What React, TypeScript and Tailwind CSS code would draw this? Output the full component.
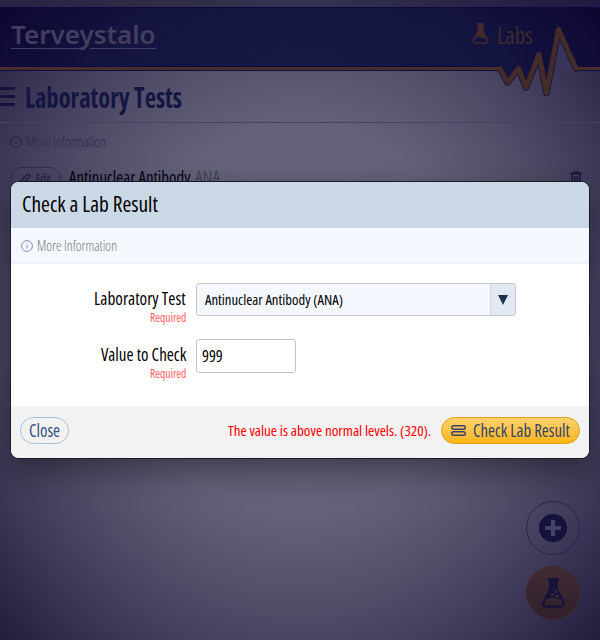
import React, { useLayoutEffect, useRef, useState } from "react";

// Condensed label: squeezes its text horizontally to a given width.
function Fit({ w, className = "", children }: { w: number; className?: string; children: string }) {
  const ref = useRef<HTMLSpanElement>(null);
  const [scale, setScale] = useState(1);
  useLayoutEffect(() => {
    if (ref.current) setScale(w / ref.current.offsetWidth);
  }, [w, children]);
  return (
    <span className={`block shrink-0 whitespace-nowrap ${className}`} style={{ width: w }}>
      <span ref={ref} className="inline-block origin-left align-top" style={{ transform: `scaleX(${scale})` }}>
        {children}
      </span>
    </span>
  );
}

function InfoIcon({ className }: { className: string }) {
  return (
    <svg viewBox="0 0 12 12" className={`size-3 shrink-0 ${className}`} fill="none" stroke="currentColor">
      <circle cx="6" cy="6" r="5.4" strokeWidth="1" />
      <path d="M6 5.200v3.300M6 3.300v1" strokeWidth="1" />
    </svg>
  );
}

function Flask({ className, bubbles = false }: { className: string; bubbles?: boolean }) {
  return (
    <svg viewBox="0 0 22 29" className={className} fill="none" stroke="currentColor">
      <path d="M6 1.500h10" strokeWidth="3" />
      <path d="M8 2v8.500L1.800 22.500Q-.2 27.300 4 27.600h14q4.200-.3 2.200-5.100L14 10.500V2" strokeWidth="2.200" />
      {bubbles ? (
        <>
          <path d="M8 2h6v9l4.500 8q-3 2-5.500.8T8 19l-4 1 4-9z" fill="currentColor" stroke="none" />
          <circle cx="14.300" cy="17.800" r="2.300" className="fill-[#3a2832]" strokeWidth=".8" />
          <circle cx="9.800" cy="16" r="1.500" className="fill-[#3a2832]" stroke="none" />
          <circle cx="13.300" cy="13.200" r="1.500" className="fill-[#3a2832]" stroke="none" />
          <circle cx="11.500" cy="10" r=".9" className="fill-[#3a2832]" stroke="none" />
        </>
      ) : (
        <path d="M8 2h6v9l5 9.500q-3 2-5.500.3T8 19.500 3 21.500l5-10.500z" fill="currentColor" stroke="none" />
      )}
    </svg>
  );
}

export default function App() {
  return (
    <div className="relative h-[640px] w-[600px] overflow-hidden bg-[radial-gradient(ellipse_430px_480px_at_50%_50%,#6a687f_0%,#646279_40%,#514d69_60%,#393453_80%,#1f1839_100%)] font-['Open_Sans',sans-serif] [font-stretch:75%]">
      <div className="h-[7px] bg-[linear-gradient(90deg,#282340,#35334f_50%,#211941)]" />
      <header className="relative flex h-[64px] items-start justify-between border-y border-[#0d0941] bg-[radial-gradient(ellipse_350px_140px_at_50%_100%,#161a45,#13133f_60%,#0c0630)]">
        <div className="ml-[11px] mt-[8px] flex flex-col text-[#433d5e]">
          <Fit w={145} className="h-[32px] font-['Noto_Sans',sans-serif] text-[26px] font-semibold leading-[36px]">Terveystalo</Fit>
          <div className="flex gap-[9px]">
            <div className="h-px w-[70px] bg-[#433d5e]" />
            <div className="h-px w-[66px] bg-[#433d5e]" />
          </div>
        </div>
        <div className="mr-[67px] mt-[11px] flex gap-2 text-[#42292d]">
          <Flask className="mt-[4px] h-[21px] w-[17px]" />
          <Fit w={36} className="text-[24px] leading-[31px]">Labs</Fit>
        </div>
        <svg viewBox="0 0 600 100" className="absolute -top-[8px] left-0 h-[100px] w-[600px]" fill="none" strokeLinejoin="round">
          <path d="M500 68.500l7.500 14 11-14zM518.500 68.500l7.500 19 8-19zM541 68.500l5.500 24.500 5-24.500z" fill="#15133f" />
          <path d="M551 68.500l7.500-39 17.500 39v3H551zM533 71l6-16.500 4 16.500z" fill="#39345a" />
          <path d="M0 68.500h500M576 68.500h24" stroke="#100b42" strokeWidth="5" />
          <path d="M500 68.500l7.500 14 11-14 7.500 19 13-33 7.500 38.500 12-63.500 17.500 39" stroke="#15123c" strokeWidth="6.500" strokeLinecap="round" />
          <path d="M0 68.500h500M576 68.500h24" stroke="#482e2a" strokeWidth="3" />
          <path d="M500 68.500l7.500 14 11-14 7.500 19 13-33 7.500 38.500 12-63.500 17.500 39" stroke="#422b28" strokeWidth="5" strokeLinecap="round" />
        </svg>
      </header>

      <div className="flex h-[52px] items-center gap-[10px] border-b border-[#454264]">
        <div className="flex flex-col gap-[5px]">
          <div className="h-[3px] w-[15px] bg-[#15123f]" />
          <div className="h-[3px] w-[15px] bg-[#15123f]" />
          <div className="h-[3px] w-[15px] bg-[#15123f]" />
        </div>
        <Fit w={157} className="text-[28px] font-bold leading-[52px] text-[#151543]">Laboratory Tests</Fit>
      </div>
      <div className="flex h-[38px] items-center gap-1 pl-[10px] text-[#2d294a]">
        <InfoIcon className="text-[#25214c]" />
        <Fit w={80} className="text-[14px] font-light leading-5">More Information</Fit>
      </div>
      <div className="flex items-start pl-[10px] pt-[6px]">
        <div className="flex h-[24px] w-[51px] items-center gap-[5px] rounded-full border border-[#302c54] pl-[8px] text-[#1d1a48]">
          <svg viewBox="0 0 12 12" className="size-3 shrink-0" fill="none" stroke="currentColor" strokeWidth="1.100">
            <path d="M1 11l.8-3.200L8 1.500q1-1 2 0l.5.500q1 1 0 2L4.200 10.200z" />
          </svg>
          <Fit w={15} className="text-[12px] leading-5">Edit</Fit>
        </div>
        <Fit w={121} className="ml-[8px] text-[18px] font-medium leading-[21px] text-[#050414]">Antinuclear Antibody</Fit>
        <Fit w={25} className="ml-[5px] text-[18px] font-light leading-[21px] text-[#353246]">ANA</Fit>
        <svg viewBox="0 0 12 16" className="ml-auto mr-[18px] mt-[4px] h-4 w-3" fill="none" stroke="#171441">
          <path d="M4 2V.500h4V2" />
          <path d="M.500 2.500h11" strokeWidth="2" />
          <path d="M2 3v12h8V3M4.700 5v8M7.300 5v8" strokeWidth="1.400" />
        </svg>
      </div>

      <div className="absolute left-[526px] top-[501px] flex size-[54px] items-center justify-center rounded-full border border-[#29264f]">
        <svg viewBox="0 0 28 28" className="size-7">
          <circle cx="14" cy="14" r="14" fill="#15123e" />
          <path d="M14 6v16M6 14h16" stroke="#464261" strokeWidth="4.200" />
        </svg>
      </div>
      <div className="absolute left-[526px] top-[566px] flex size-[54px] items-center justify-center rounded-full border border-[#45262c] bg-gradient-to-b from-[#3f2b33] to-[#30202c]">
        <Flask bubbles className="h-[30px] w-[23px] text-[#14113c]" />
      </div>

      <div role="dialog" className="absolute left-[10px] top-[181px] flex h-[278px] w-[580px] flex-col overflow-hidden rounded-[9px] border border-[#171c2b] bg-white shadow-[0_12px_32px_rgba(0,0,0,0.4)]">
        <div className="flex h-[46px] items-center border-b border-[#c4d3e2] bg-[#cbd9e6] pb-[3px] pl-[11px]">
          <Fit w={136} className="text-[22px] font-medium leading-[42px] text-black">Check a Lab Result</Fit>
        </div>
        <div className="flex h-[36px] items-center gap-1 border-b-2 border-[#edf1f6] bg-[#f5f9ff] pl-[10px] pt-[2px]">
          <InfoIcon className="text-[#7f8eb4]" />
          <Fit w={80} className="text-[14px] font-light leading-5 text-[#6f767b]">More Information</Fit>
        </div>
        <div className="flex h-[142px] flex-col gap-[14px] pl-5 pt-[19px]">
          <div className="flex h-[42px] gap-[10px]">
            <div className="flex w-[155px] flex-col items-end">
              <Fit w={92} className="h-[29px] text-[18px] font-medium leading-[30px] text-black">Laboratory Test</Fit>
              <Fit w={36} className="text-[12.500px] leading-[11px] text-[#ff5c5c]">Required</Fit>
            </div>
            <div className="flex h-[33px] w-[320px] overflow-hidden rounded-[3px] border border-[#c4c6ca] bg-[#f5f9ff]">
              <Fit w={138} className="ml-[8px] text-[15px] font-medium leading-[31px] text-black">Antinuclear Antibody (ANA)</Fit>
              <div className="ml-auto flex w-[25px] items-center justify-center border-l border-[#ccd7e5] bg-[#e2e9f3]">
                <svg viewBox="0 0 10 10" className="size-[10px]"><path d="M0 0h10L5 10z" fill="#20324b" /></svg>
              </div>
            </div>
          </div>
          <div className="flex h-[42px] gap-[10px]">
            <div className="flex w-[155px] flex-col items-end">
              <Fit w={85} className="h-[29px] text-[18px] font-medium leading-[30px] text-black">Value to Check</Fit>
              <Fit w={36} className="text-[12.500px] leading-[11px] text-[#ff5c5c]">Required</Fit>
            </div>
            <div className="h-[34px] w-[100px] rounded-[3px] border border-[#c1c1c1] bg-white pl-[5px]">
              <Fit w={21} className="text-[15.500px] leading-[32px] text-black">999</Fit>
            </div>
          </div>
        </div>
        <div className="flex flex-1 items-start bg-[#f2f2f2] px-[9px] pt-[11px]">
          <div className="flex h-[27px] w-[49px] items-center justify-center rounded-full border border-[#a9bfda] pr-px">
            <Fit w={31} className="text-[18px] font-medium leading-[25px] text-[#30507c]">Close</Fit>
          </div>
          <Fit w={203} className="ml-auto mr-[10px] text-[14.500px] font-medium leading-[27px] text-[#ff0000]">The value is above normal levels. (320).</Fit>
          <div className="flex h-[27px] w-[139px] items-center gap-[7px] rounded-full border border-[#dda01c] bg-gradient-to-b from-[#ffd16a] to-[#ffb506] pl-[9px]">
            <svg viewBox="0 0 15 11" className="h-[11px] w-[15px] shrink-0" fill="none" stroke="#30446a" strokeWidth="1.400">
              <rect x=".7" y=".7" width="13.600" height="3.600" rx="1.800" />
              <rect x=".7" y="6.700" width="13.600" height="3.600" rx="1.800" />
            </svg>
            <Fit w={97} className="text-[18px] font-medium leading-[25px] text-[#30446a]">Check Lab Result</Fit>
          </div>
        </div>
      </div>
    </div>
  );
}
